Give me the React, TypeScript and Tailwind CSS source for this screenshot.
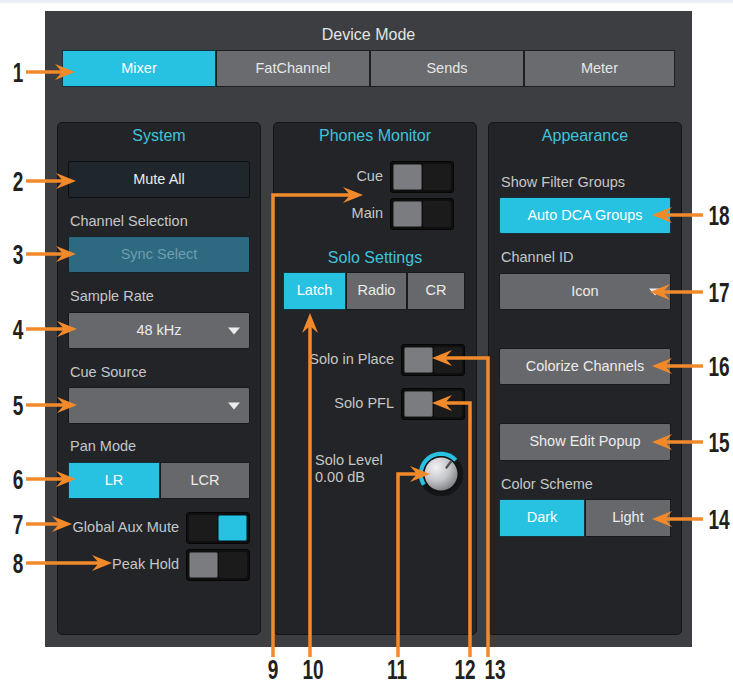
import React from 'react';

const ORANGE = '#f28a2b';

function Toggle({ on }: { on?: boolean }) {
    return (
        <div className="w-[64px] h-[32px] rounded-[3px] bg-[#0f0f10] border border-[#060606] p-[2px] flex gap-[1px]">
            {on ? (
                <>
                    <div className="flex-1 bg-[#1b1b1c] rounded-[2px]" />
                    <div className="w-[29px] bg-[#27c1e1] border border-[#0f6f85] rounded-[2px]" />
                </>
            ) : (
                <>
                    <div className="w-[29px] bg-[#7b7c7f] border border-[#48494b] rounded-[2px]" />
                    <div className="flex-1 bg-[#1b1b1c] rounded-[2px]" />
                </>
            )}
        </div>
    );
}

function Caret() {
    return (
        <div className="absolute right-[9px] top-1/2 -translate-y-1/2 w-0 h-0 border-l-[6px] border-r-[6px] border-t-[7px] border-l-transparent border-r-transparent border-t-[#ececec]" />
    );
}

function Title({ children }: { children: React.ReactNode }) {
    return (
        <div className="h-[25px] flex items-center justify-center text-[16px] text-[#3fc3d8]">
            {children}
        </div>
    );
}

function Label({ children, className }: { children: React.ReactNode; className?: string }) {
    return <div className={"h-[18px] flex items-center text-[14.5px] text-[#c6c6c6] " + (className ?? '')}>{children}</div>;
}

function Knob() {
    // ring: cyan arc from bottom-left over the top to upper-right
    const cx = 23, cy = 23, r = 20;
    const pt = (deg: number) => {
        const a = (deg * Math.PI) / 180;
        return [cx + r * Math.cos(a), cy - r * Math.sin(a)];
    };
    const [sx, sy] = pt(212);
    const [ex, ey] = pt(43);
    return (
        <svg width="46" height="46" viewBox="0 0 46 46">
            <defs>
                <radialGradient id="kb" cx="35%" cy="30%" r="75%">
                    <stop offset="0%" stopColor="#f2f2f4" />
                    <stop offset="55%" stopColor="#c4c5c8" />
                    <stop offset="100%" stopColor="#7f8084" />
                </radialGradient>
            </defs>
            <circle cx={cx} cy={cy} r={r} fill="none" stroke="#141517" strokeWidth="4.5" />
            <path d={`M ${sx} ${sy} A ${r} ${r} 0 0 1 ${ex} ${ey}`} fill="none" stroke="#27c1e1" strokeWidth="4.5" />
            <circle cx={cx} cy={cy} r="18" fill="#101112" />
            <circle cx={cx} cy={cy} r="16.5" fill="url(#kb)" />
            <line x1={cx + 5.5} y1={cy - 6.5} x2={cx + 10} y2={cy - 12.5} stroke="#505154" strokeWidth="2.2" strokeLinecap="round" />
        </svg>
    );
}

type Dir = 'r' | 'l' | 'u';

function head(x: number, y: number, d: Dir) {
    const L = 20, W = 8, N = 13;
    if (d === 'r') return `${x},${y} ${x - L},${y - W} ${x - N},${y} ${x - L},${y + W}`;
    if (d === 'l') return `${x},${y} ${x + L},${y - W} ${x + N},${y} ${x + L},${y + W}`;
    return `${x},${y} ${x - W},${y + L} ${x},${y + N} ${x + W},${y + L}`;
}

const leftArrows = [
    { n: '1', y: 72, tip: 75 },
    { n: '2', y: 181, tip: 76 },
    { n: '3', y: 254, tip: 76 },
    { n: '4', y: 329, tip: 77 },
    { n: '5', y: 405, tip: 77 },
    { n: '6', y: 479, tip: 76 },
    { n: '7', y: 524, tip: 72 },
    { n: '8', y: 563, tip: 112 },
];

const rightArrows = [
    { n: '18', y: 215, tip: 652 },
    { n: '17', y: 292, tip: 650 },
    { n: '16', y: 366, tip: 652 },
    { n: '15', y: 442, tip: 652 },
    { n: '14', y: 519, tip: 652 },
];

const bottomNums = [
    { n: '9', x: 273 },
    { n: '10', x: 313 },
    { n: '11', x: 397 },
    { n: '12', x: 465 },
    { n: '13', x: 495 },
];

const numCls = 'absolute w-[40px] h-[28px] flex items-center justify-center text-[28px] leading-none font-bold text-[#231f20] scale-x-[0.68]';

function Callouts() {
    return (
        <>
            <svg className="absolute inset-0 pointer-events-none" width="733" height="684" viewBox="0 0 733 684">
                <g stroke={ORANGE} strokeWidth="3.5" fill="none">
                    {leftArrows.map((a) => (
                        <line key={a.n} x1="26" y1={a.y} x2={a.tip - 12} y2={a.y} />
                    ))}
                    {rightArrows.map((a) => (
                        <line key={a.n} x1="703" y1={a.y} x2={a.tip + 12} y2={a.y} />
                    ))}
                    <polyline points="273,657 273,195 352,195" />
                    <line x1="310" y1="657" x2="310" y2="325" />
                    <polyline points="398,657 398,474 418,474" />
                    <polyline points="470,657 470,403 444,403" />
                    <polyline points="488,657 488,358 444,358" />
                </g>
                <g fill={ORANGE}>
                    {leftArrows.map((a) => (
                        <polygon key={a.n} points={head(a.tip, a.y, 'r')} />
                    ))}
                    {rightArrows.map((a) => (
                        <polygon key={a.n} points={head(a.tip, a.y, 'l')} />
                    ))}
                    <polygon points={head(363, 195, 'r')} />
                    <polygon points={head(310, 313, 'u')} />
                    <polygon points={head(430, 474, 'r')} />
                    <polygon points={head(432, 403, 'l')} />
                    <polygon points={head(432, 358, 'l')} />
                </g>
            </svg>
            {leftArrows.map((a) => (
                <div key={a.n} className={numCls} style={{ left: -2, top: a.y - 13 }}>{a.n}</div>
            ))}
            {rightArrows.map((a) => (
                <div key={a.n} className={numCls} style={{ left: 699, top: a.y - 13 }}>{a.n}</div>
            ))}
            {bottomNums.map((b) => (
                <div key={b.n} className={numCls} style={{ left: b.x - 20, top: 656 }}>{b.n}</div>
            ))}
        </>
    );
}

const btn = 'h-[37px] rounded-[2px] border border-[#1a1a1c] bg-[#67686b] flex items-center justify-center text-[14.5px] text-[#ececec]';
const panel = 'h-[513px] bg-[#232428] border border-[#141517] rounded-[5px]';

export default function App() {
    return (
        <div className="relative w-[733px] h-[684px] bg-white overflow-hidden font-['Liberation_Sans',Arial,sans-serif]">
            <div className="h-[3px] bg-[#eceef8]" />
            <div className="ml-[45px] mt-[8px] w-[647px] h-[636px] bg-[#3d3e42] pt-[14px]">
                <div className="h-[20px] flex items-center justify-center text-[16px] text-[#e4e4e4]">Device Mode</div>
                <div className="mt-[5px] ml-[17px] w-[613px] h-[37px] flex text-[14.5px] text-[#e6e6e6]">
                    <div className="w-[154px] bg-[#27c1e1] border border-[#16323a] flex items-center justify-center text-white">Mixer</div>
                    <div className="w-[154px] bg-[#6a6b6e] border border-[#1e1f22] flex items-center justify-center">FatChannel</div>
                    <div className="w-[154px] bg-[#6a6b6e] border border-[#1e1f22] flex items-center justify-center">Sends</div>
                    <div className="flex-1 bg-[#6a6b6e] border border-[#1e1f22] flex items-center justify-center">Meter</div>
                </div>

                <div className="mt-[35px] ml-[12px] flex">
                    {/* System */}
                    <div className={panel + ' w-[204px] px-[10px]'}>
                        <Title>System</Title>
                        <div className="mt-[13px] h-[37px] rounded-[2px] border border-[#0c1013] bg-[#1f272c] flex items-center justify-center text-[14.5px] text-[#ececec]">
                            Mute All
                        </div>
                        <Label className="mt-[15px] pl-[2px]">Channel Selection</Label>
                        <div className="mt-[5px] h-[37px] rounded-[2px] border border-[#13242b] bg-[#2d6980] flex items-center justify-center text-[14.5px] text-[#6d9eb1]">
                            Sync Select
                        </div>
                        <Label className="mt-[15px] pl-[2px]">Sample Rate</Label>
                        <div className={btn + ' relative mt-[6px]'}>
                            48 kHz
                            <Caret />
                        </div>
                        <Label className="mt-[15px] pl-[2px]">Cue Source</Label>
                        <div className={btn + ' relative mt-[5px]'}>
                            <Caret />
                        </div>
                        <Label className="mt-[14px] pl-[2px]">Pan Mode</Label>
                        <div className="mt-[6px] h-[37px] flex text-[14.5px] text-[#ececec]">
                            <div className="w-[92px] bg-[#27c1e1] border border-[#16323a] flex items-center justify-center text-white">LR</div>
                            <div className="flex-1 bg-[#67686b] border border-[#1a1a1c] flex items-center justify-center">LCR</div>
                        </div>
                        <div className="mt-[13px] flex items-center justify-end gap-[7px]">
                            <span className="text-[14.5px] text-[#c6c6c6]">Global Aux Mute</span>
                            <Toggle on />
                        </div>
                        <div className="mt-[5px] flex items-center justify-end gap-[7px]">
                            <span className="text-[14.5px] text-[#c6c6c6]">Peak Hold</span>
                            <Toggle />
                        </div>
                    </div>

                    {/* Phones Monitor */}
                    <div className={panel + ' w-[204px] ml-[12px]'}>
                        <Title>Phones Monitor</Title>
                        <div className="mt-[13px] pr-[22px] flex items-center justify-end gap-[7px]">
                            <span className="text-[14.5px] text-[#c6c6c6]">Cue</span>
                            <Toggle />
                        </div>
                        <div className="mt-[5px] pr-[22px] flex items-center justify-end gap-[7px]">
                            <span className="text-[14.5px] text-[#c6c6c6]">Main</span>
                            <Toggle />
                        </div>
                        <div className="mt-[18px] h-[20px] flex items-center justify-center text-[16px] text-[#3fc3d8]">Solo Settings</div>
                        <div className="mt-[4px] ml-[9px] w-[182px] h-[38px] flex text-[14.5px] text-[#ececec]">
                            <div className="w-[63px] bg-[#27c1e1] border border-[#16323a] flex items-center justify-center text-white">Latch</div>
                            <div className="w-[61px] bg-[#67686b] border border-[#1a1a1c] flex items-center justify-center">Radio</div>
                            <div className="flex-1 bg-[#67686b] border border-[#1a1a1c] flex items-center justify-center">CR</div>
                        </div>
                        <div className="mt-[34px] pr-[11px] flex items-center justify-end gap-[7px]">
                            <span className="text-[14.5px] text-[#c6c6c6]">Solo in Place</span>
                            <Toggle />
                        </div>
                        <div className="mt-[12px] pr-[11px] flex items-center justify-end gap-[7px]">
                            <span className="text-[14.5px] text-[#c6c6c6]">Solo PFL</span>
                            <Toggle />
                        </div>
                        <div className="mt-[31px] pl-[41px] pr-[12px] flex items-start justify-between">
                            <div className="pt-[1px] text-[14.5px] leading-[17px] text-[#c6c6c6]">
                                <div>Solo Level</div>
                                <div>0.00 dB</div>
                            </div>
                            <Knob />
                        </div>
                    </div>

                    {/* Appearance */}
                    <div className={panel + ' w-[194px] ml-[11px] px-[10px]'}>
                        <Title>Appearance</Title>
                        <Label className="mt-[26px] pl-[2px]">Show Filter Groups</Label>
                        <div className="mt-[5px] h-[37px] rounded-[2px] border border-[#16323a] bg-[#27c1e1] flex items-center justify-center text-[14.5px] text-white">
                            Auto DCA Groups
                        </div>
                        <Label className="mt-[15px] pl-[2px]">Channel ID</Label>
                        <div className={btn + ' relative mt-[6px]'}>
                            Icon
                            <Caret />
                        </div>
                        <div className={btn + ' mt-[38px]'}>Colorize Channels</div>
                        <div className={btn + ' mt-[38px] h-[38px]'}>Show Edit Popup</div>
                        <Label className="mt-[15px] pl-[2px]">Color Scheme</Label>
                        <div className="mt-[5px] h-[38px] flex text-[14.5px] text-[#ececec]">
                            <div className="w-[86px] bg-[#27c1e1] border border-[#16323a] flex items-center justify-center text-white">Dark</div>
                            <div className="flex-1 bg-[#67686b] border border-[#1a1a1c] flex items-center justify-center">Light</div>
                        </div>
                    </div>
                </div>
            </div>
            <Callouts />
        </div>
    );
}
